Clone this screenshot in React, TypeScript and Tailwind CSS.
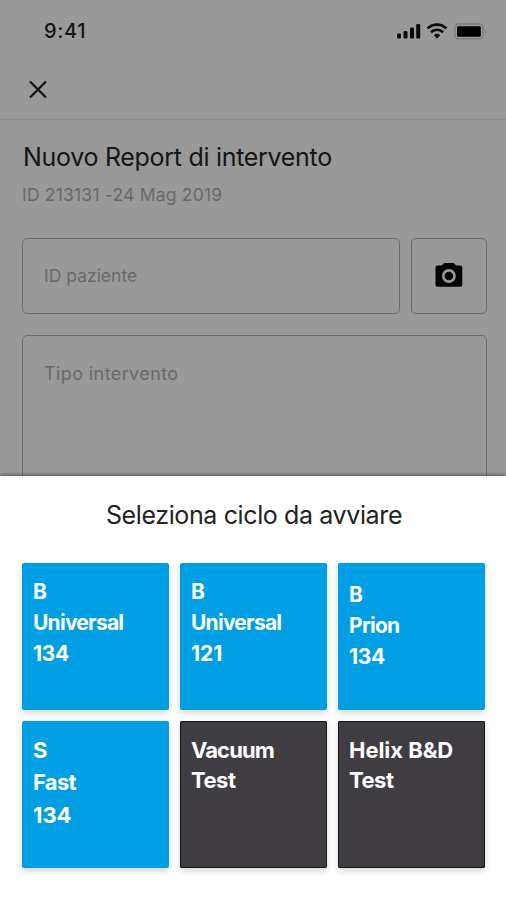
import clsx from "clsx";

interface CycleLine {
  text: string;
  className?: string;
}

interface Cycle {
  id: string;
  lines: CycleLine[];
  className: string;
}

const cycles: Cycle[] = [
  {
    id: "b-universal-134",
    lines: [{ text: "B" }, { text: "Universal", className: "tracking-[-0.75px]" }, { text: "134", className: "tracking-[-0.3px]" }],
    className: "bg-[#009fe3] pt-[13px] leading-[31px] text-[21px]",
  },
  {
    id: "b-universal-121",
    lines: [{ text: "B" }, { text: "Universal", className: "tracking-[-0.75px]" }, { text: "121" }],
    className: "bg-[#009fe3] pt-[13px] leading-[31px] text-[21px]",
  },
  {
    id: "b-prion-134",
    lines: [{ text: "B" }, { text: "Prion", className: "tracking-[-0.7px]" }, { text: "134", className: "tracking-[-0.3px]" }],
    className: "bg-[#009fe3] pt-[16px] leading-[31px] text-[21px]",
  },
  {
    id: "s-fast-134",
    lines: [{ text: "S" }, { text: "Fast", className: "tracking-[-0.7px]" }, { text: "134", className: "tracking-[-0.1px]" }],
    className: "bg-[#009fe3] pt-[12.5px] leading-[32.5px] text-[22px]",
  },
  {
    id: "vacuum",
    lines: [{ text: "Vacuum", className: "tracking-[-0.9px]" }, { text: "Test", className: "tracking-[-0.5px]" }],
    className: "bg-[#403d42] inset-ring inset-ring-[#161518] pt-[14px] leading-[30px] text-[22px]",
  },
  {
    id: "helix",
    lines: [{ text: "Helix B&D", className: "tracking-[-0.05px]" }, { text: "Test", className: "tracking-[-0.5px]" }],
    className: "bg-[#403d42] inset-ring inset-ring-[#161518] pt-[14px] leading-[30px] text-[22px]",
  },
];

function StatusIcons() {
  return (
    <svg width="92" height="18" viewBox="0 0 92 18" fill="none">
      <g fill="#0b0b0b">
        <rect x="1" y="11.5" width="4" height="5" rx="1.2" />
        <rect x="7.5" y="9" width="4" height="7.5" rx="1.2" />
        <rect x="14" y="5.5" width="4" height="11" rx="1.2" />
        <rect x="20.2" y="2" width="4" height="14.5" rx="1.2" />
      </g>
      <g stroke="#0b0b0b" strokeWidth="2.7">
        <path d="M31.6 6.4a13.4 13.4 0 0 1 18.8 0" />
        <path d="M35 10.2a8.6 8.6 0 0 1 12 0" />
      </g>
      <path d="M37.8 13.2a4.7 4.7 0 0 1 6.4 0L41 16.400z" fill="#0b0b0b" />
      <rect x="59" y="2" width="27.800" height="14.800" rx="3.600" stroke="#7c7c7c" strokeWidth="1.300" />
      <rect x="61" y="4.200" width="23.800" height="10.600" rx="1.300" fill="#000" />
      <path d="M88.600 7.200v4.600c1-.4 1.600-1.200 1.600-2.300s-.6-1.900-1.600-2.300z" fill="#828282" />
    </svg>
  );
}

function CameraIcon() {
  return (
    <svg width="28" height="26" viewBox="0 0 28 26" className="mb-[3px]">
      <path
        d="M9.2 1h9.4l2.6 2.6h4.2a1.9 1.9 0 0 1 1.9 1.9v17.300a1.900 1.900 0 0 1-1.900 1.900h-23a1.900 1.900 0 0 1-1.900-1.900V5.500a1.900 1.900 0 0 1 1.900-1.900h4.200z"
        fill="#050505"
      />
      <circle cx="13.900" cy="14" r="5.600" fill="none" stroke="#999" strokeWidth="2.600" />
    </svg>
  );
}

export default function App() {
  return (
    <div className="flex h-[900px] w-[506px] flex-col overflow-hidden bg-[#999] font-['Inter',sans-serif]">
      <div className="flex h-[476px] shrink-0 flex-col overflow-hidden">
        <header className="h-[120px] shrink-0 border-b border-[#8d8d8d]">
          <div className="flex h-[62px] items-center justify-between pl-[44px] pr-[18px]">
            <span className="text-[20px] font-medium tracking-[0.7px] text-[#151515]">9:41</span>
            <StatusIcons />
          </div>
          <button className="ml-[29px] mt-[18px] block" aria-label="Chiudi">
            <svg width="19" height="19" viewBox="0 0 19 19" fill="none">
              <path d="M1 1.500l16 16M17 1.500l-16 16" stroke="#111" strokeWidth="2.200" />
            </svg>
          </button>
        </header>

        <main className="flex flex-1 flex-col pl-[22px] pr-[19px]">
          <h1 className="mt-[22px] whitespace-nowrap pl-px text-[25px] leading-[30px] tracking-[-0.3px] text-[#151515]">
            Nuovo Report di intervento
          </h1>
          <p className="mt-[11px] whitespace-nowrap text-[17.5px] leading-[23px] tracking-[0.2px] text-[#696969]">
            ID 213131 -24 Mag 2019
          </p>

          <div className="mt-[32px] flex gap-[11px]">
            <div className="flex h-[76px] w-[378px] items-center rounded-[5px] border-[1.5px] border-[#6c6c6c] pl-[21px] text-[17.5px] text-[#6a6a6a]">
              ID paziente
            </div>
            <div className="flex h-[76px] w-[76px] items-center justify-center rounded-[5px] border-[1.5px] border-[#6c6c6c]">
              <CameraIcon />
            </div>
          </div>

          <div className="mt-[21px] h-[160px] w-[465px] shrink-0 rounded-[5px] border-[1.5px] border-[#6c6c6c] pl-[21px] pt-[26px] text-[18px] leading-[24px] tracking-[0.4px] text-[#6a6a6a]">
            Tipo intervento
          </div>
        </main>
      </div>

      <section className="z-10 flex-1 bg-white shadow-[0_-1px_4px_rgba(0,0,0,0.45)]">
        <h2 className="mt-[24px] whitespace-nowrap pl-[2px] text-center text-[25px] leading-[30px] tracking-[-0.38px] text-[#222]">
          Seleziona ciclo da avviare
        </h2>
        <div className="mt-[33px] grid grid-cols-[147px_147px_147px] gap-[11px] pl-[22px]">
          {cycles.map((cycle) => (
            <button
              key={cycle.id}
              className={clsx(
                "flex h-[147px] flex-col items-start rounded-[2px] pl-[11px] text-left font-bold text-white shadow-[0_3px_6px_rgba(0,0,0,0.16)]",
                cycle.className
              )}
            >
              {cycle.lines.map((line) => (
                <span key={line.text} className={clsx("whitespace-nowrap", line.className)}>
                  {line.text}
                </span>
              ))}
            </button>
          ))}
        </div>
      </section>
    </div>
  );
}
